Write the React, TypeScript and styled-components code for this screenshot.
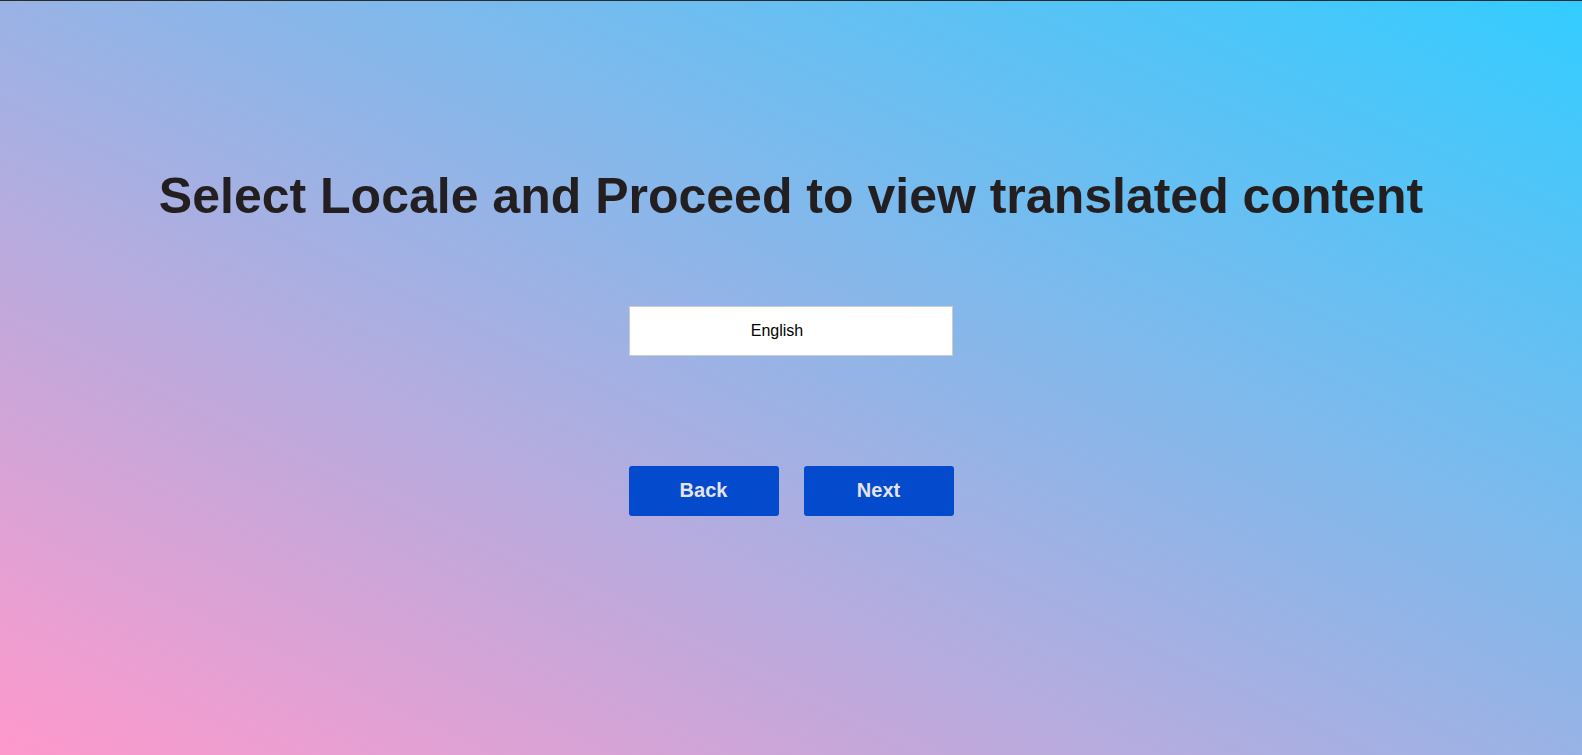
import React, { useState } from 'react';
import styled, { createGlobalStyle } from 'styled-components';

const GlobalStyle = createGlobalStyle`
  html, body {
    margin: 0;
    padding: 0;
  }
  body {
    font-family: "Liberation Sans", Arial, sans-serif;
  }
`;

const Page = styled.div`
  min-height: 100vh;
  box-sizing: border-box;
  border-top: 1px solid #2b2b2b;
  background-image: linear-gradient(to top right, #ff99cc 0%, #33ccff 100%);
  display: flex;
  flex-direction: column;
  align-items: center;
  padding-top: 167px;
`;

const Title = styled.h1`
  margin: 0;
  font-size: 50px;
  line-height: 57px;
  font-weight: 700;
  color: #231f20;
  text-align: center;
`;

const LocaleSelect = styled.select`
  margin-top: 81px;
  width: 324px;
  height: 50px;
  box-sizing: border-box;
  padding: 0 28px 2px 0;
  border: 1px solid #cccccc;
  border-radius: 0;
  background: #ffffff;
  appearance: none;
  -webkit-appearance: none;
  text-align: center;
  text-align-last: center;
  font-family: "Liberation Sans", Arial, sans-serif;
  font-size: 16px;
  color: #000;
  outline: none;
`;

const ButtonRow = styled.div`
  margin-top: 110px;
  display: flex;
  gap: 25px;
`;

const NavButton = styled.button`
  width: 150px;
  height: 50px;
  border: none;
  border-radius: 3px;
  background: #034acd;
  color: #e4e4ea;
  font-family: "Liberation Sans", Arial, sans-serif;
  font-size: 20px;
  font-weight: 700;
  padding: 0 0 2px;
  cursor: pointer;
`;

const locales = [
  { value: 'en', label: 'English' },
  { value: 'fr', label: 'French' },
  { value: 'de', label: 'German' },
  { value: 'es', label: 'Spanish' },
];

export default function App() {
  const [locale, setLocale] = useState('en');
  return (
    <>
      <GlobalStyle />
      <Page>
        <Title>Select Locale and Proceed to view translated content</Title>
        <LocaleSelect value={locale} onChange={e => setLocale(e.target.value)}>
          {locales.map(l => (
            <option key={l.value} value={l.value}>{l.label}</option>
          ))}
        </LocaleSelect>
        <ButtonRow>
          <NavButton>Back</NavButton>
          <NavButton>Next</NavButton>
        </ButtonRow>
      </Page>
    </>
  );
}
